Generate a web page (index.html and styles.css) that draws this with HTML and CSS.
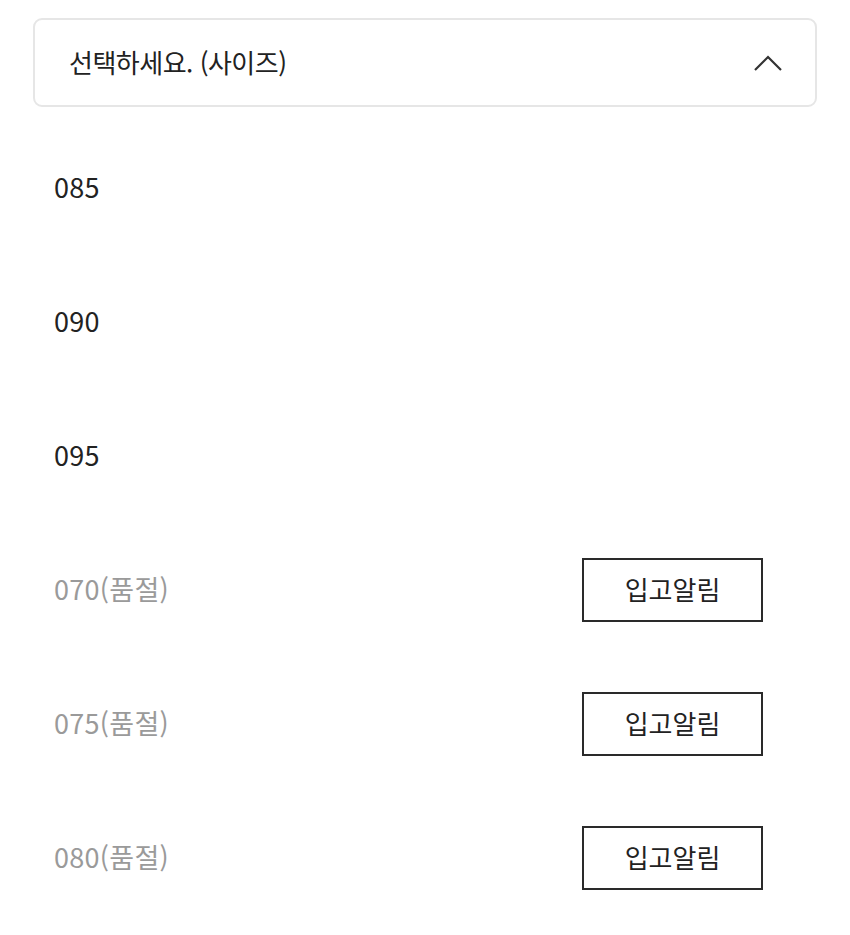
FILE: index.html
```html
<!DOCTYPE html>
<html lang="ko">
<head>
    <meta charset="UTF-8">
    <title>사이즈 선택</title>
    <link rel="stylesheet" href="styles.css">
</head>
<body>
    <div class="size-select">
        <div class="select-head">
            <span class="select-label">선택하세요. (사이즈)</span>
            <svg class="chevron" width="30" height="18" viewBox="0 0 30 18">
                <path d="M2 16 L15 3 L28 16" fill="none" stroke="#333" stroke-width="2.2"/>
            </svg>
        </div>

        <ul class="size-list">
            <li class="size-item"><span class="size-name">085</span></li>
            <li class="size-item"><span class="size-name">090</span></li>
            <li class="size-item"><span class="size-name">095</span></li>
            <li class="size-item soldout">
                <span class="size-name">070(품절)</span>
                <button type="button" class="notify-btn">입고알림</button>
            </li>
            <li class="size-item soldout">
                <span class="size-name">075(품절)</span>
                <button type="button" class="notify-btn">입고알림</button>
            </li>
            <li class="size-item soldout">
                <span class="size-name">080(품절)</span>
                <button type="button" class="notify-btn">입고알림</button>
            </li>
        </ul>
    </div>
</body>
</html>
```

FILE: styles.css
```css
body {
    margin: 0;
    background: #fff;
    font-family: "Noto Sans CJK KR", "Noto Sans", sans-serif;
    color: #222;
}
.size-select {
    padding: 18px 33px 0 33px;
}
.select-head {
    display: flex;
    align-items: center;
    justify-content: space-between;
    height: 85px;
    padding: 0 32px 0 34px;
    border: 2px solid #e6e6e6;
    border-radius: 9px;
}
.select-label {
    font-size: 26px;
    letter-spacing: -0.5px;
    margin-top: -3px;
}
.chevron {
    display: block;
}
.size-list {
    list-style: none;
    margin: 14px 0 0 0;
    padding: 0 54px 0 21px;
}
.size-item {
    display: flex;
    align-items: center;
    justify-content: space-between;
    height: 134px;
}
.size-name {
    font-size: 27px;
    letter-spacing: 0.3px;
    margin-top: -4px;
}
.soldout .size-name {
    color: #9a9a9a;
}
.notify-btn {
    width: 181px;
    height: 64px;
    padding: 0 0 3px 0;
    background: #fff;
    border: 2px solid #2a2a2a;
    font-family: "Noto Sans CJK KR", sans-serif;
    font-size: 26px;
    color: #222;
    cursor: pointer;
}
```
